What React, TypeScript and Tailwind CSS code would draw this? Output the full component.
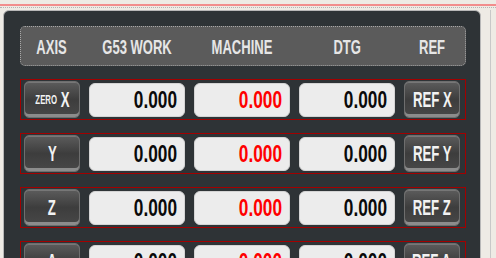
const font = "font-['Liberation_Sans',Arial,sans-serif] font-bold"

type Row = { axis: string; zero?: boolean; g53: string; machine: string; dtg: string }

const rows: Row[] = [
  { axis: 'X', zero: true, g53: '0.000', machine: '0.000', dtg: '0.000' },
  { axis: 'Y', g53: '0.000', machine: '0.000', dtg: '0.000' },
  { axis: 'Z', g53: '0.000', machine: '0.000', dtg: '0.000' },
  { axis: 'A', g53: '0.000', machine: '0.000', dtg: '0.000' },
]

function DroButton({ children }: { children: React.ReactNode }) {
  return (
    <button className="w-[56px] h-[37px] shrink-0 flex items-center justify-center rounded-[5px] border border-[#6e6e6e] bg-gradient-to-b from-[#5c5c5c] via-[#3d3d3d] to-[#484848] shadow-[inset_0_-3px_0_#8c8c8c,inset_0_1px_0_#777] text-[#f2f2f2] whitespace-nowrap">
      <span className="inline-flex items-center gap-[6px] scale-x-[0.6] origin-center">{children}</span>
    </button>
  )
}

function Field({ value, red }: { value: string; red?: boolean }) {
  return (
    <div className={`w-[96px] h-[34px] shrink-0 rounded-[6px] bg-[#ececec] border border-[#d4d4d4] flex items-center justify-end pr-[7px] text-[24px] leading-none ${red ? 'text-[#ff0000]' : 'text-[#0a0a0a]'}`}>
      <span className="inline-block scale-x-[0.72] origin-right whitespace-nowrap">{value}</span>
    </div>
  )
}

function Head({ w, children }: { w: string; children: React.ReactNode }) {
  return (
    <div className={`${w} flex justify-center whitespace-nowrap`}>
      <span className="inline-block scale-x-[0.62] origin-center">{children}</span>
    </div>
  )
}

export default function App() {
  return (
    <div className={`w-[496px] h-[258px] overflow-hidden bg-[#eeebe5] ${font}`}>
      <div className="h-[4px]" />
      <div className="h-[2px] bg-[#f28d8d]" />
      <div className="h-[1px]" />
      <div className="h-[1px] border-t border-dotted border-[#b5b5b5]" />
      <div className="h-[2px]" />
      <div className="flex">
        <div className="w-[3px]" />
        <div className="w-[478px] h-[260px] bg-[#2e3336] rounded-t-[6px] border border-[#b8b8b8] pt-[15px] pl-[16px]">
          <div className="w-[446px] h-[40px] rounded-[5px] bg-[#5b5b5b] border border-dotted border-[#a8a8a8] flex items-center pl-[3px] gap-[9px] text-[21px] text-[#e6e6e6] leading-none">
            <Head w="w-[56px]">AXIS</Head>
            <Head w="w-[96px]">G53 WORK</Head>
            <Head w="w-[96px]">MACHINE</Head>
            <Head w="w-[96px]">DTG</Head>
            <Head w="w-[56px]">REF</Head>
          </div>
          <div className="flex flex-col gap-[13px] mt-[13px]">
            {rows.map((r) => (
              <div key={r.axis} className="w-[446px] h-[41px] shrink-0 border border-solid border-[#a30000] flex items-center pl-[3px] gap-[9px]">
                <DroButton>
                  {r.zero && <span className="text-[13px] leading-none">ZERO</span>}
                  <span className="text-[22px] leading-none">{r.axis}</span>
                </DroButton>
                <Field value={r.g53} />
                <Field value={r.machine} red />
                <Field value={r.dtg} />
                <DroButton>
                  <span className="text-[22px] leading-none">REF {r.axis}</span>
                </DroButton>
              </div>
            ))}
          </div>
        </div>
        <div className="w-[9px]" />
        <div className="w-[1px] h-[260px] bg-[#c8c8c8]" />
      </div>
    </div>
  )
}
